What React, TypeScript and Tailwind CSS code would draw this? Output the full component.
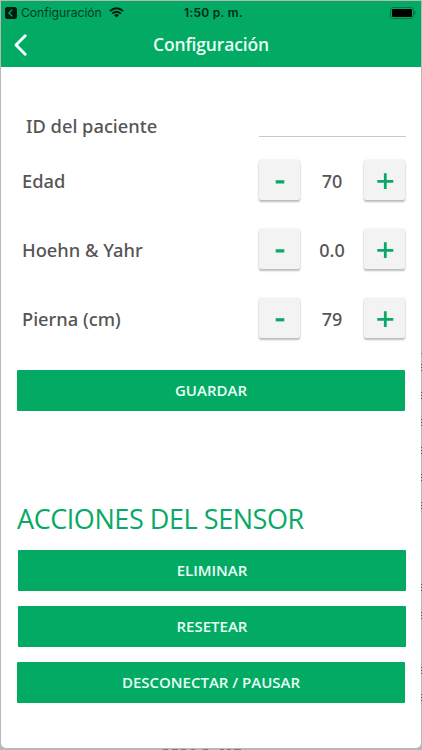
import React from 'react';

const sans = "font-['Noto_Sans','Open_Sans',sans-serif]";

// Vertical positions of the page marks that peek out beside the window.
const marks = [367, 395, 422, 450, 477, 505, 587, 615, 670, 697];

function StepButton({ plus = false }: { plus?: boolean }) {
  return (
    <button
      aria-label={plus ? 'Aumentar' : 'Disminuir'}
      className="flex h-[40px] w-[41px] shrink-0 items-center justify-center rounded-[2px] bg-[#f3f3f3] shadow-[0_2px_2px_rgba(0,0,0,0.25),0_0_2px_rgba(0,0,0,0.12)]"
    >
      <svg width="18" height="18" viewBox="0 0 18 18" fill="none" stroke="#08a965">
        {plus ? <path d="M1.3 10.3H17.3M9.3 2.3V18" strokeWidth="2.8" /> : <path d="M4.7 10.8H13.3" strokeWidth="3.2" />}
      </svg>
    </button>
  );
}

function Row({ label, value }: { label: string; value: string }) {
  return (
    <div className="flex h-[41px] items-start">
      <span className="mt-[9px] w-[238px] pl-px text-[18.3px] leading-[24px] font-medium whitespace-nowrap">{label}</span>
      <StepButton />
      <span className="mt-[9px] w-[64px] text-center text-[18px] leading-[24px] font-medium">{value}</span>
      <StepButton plus />
    </div>
  );
}

function Action({ children, className = '' }: { children: React.ReactNode; className?: string }) {
  return (
    <button
      className={`flex h-[41px] w-[388px] items-center justify-center rounded-[1px] bg-[#02aa64] pb-[2px] font-['Open_Sans'] text-[15px] leading-[20px] font-semibold text-[#e8fff4] ${className}`}
    >
      {children}
    </button>
  );
}

export default function App() {
  return (
    <div className={`relative h-[750px] w-[422px] overflow-hidden bg-[#b8b8b8] pt-px pr-[1px] pb-[2px] pl-px text-[#555] ${sans}`}>
      <svg className="absolute inset-0" width="422" height="750" stroke="#555">
        {marks.map((y) => (
          <path key={y} d={`M421 ${y - 2.5}h1m-1 3h1m-1 3h1`} />
        ))}
        <path d="M421 353.5h1M163 749.5h5m4 0h6m3 0h5m5 0h4m8 0h5m12 0h4m3 0h4m3 0h7" opacity=".6" />
      </svg>
      <main className="relative h-[747px] w-[420px] overflow-hidden rounded-b-[5px] bg-white">
        <header className="h-[66px] bg-[#02aa64]">
          <div className="grid h-[23px] grid-cols-3 items-center pr-[5px] pl-[4px] font-['Inter',sans-serif] text-black">
            <div className="flex items-center">
              <svg width="12" height="12" viewBox="0 0 12 12">
                <rect width="12" height="12" rx="2.5" fill="#001b0f" />
                <path d="M7.3 2.6L3.9 6l3.4 3.4" fill="none" stroke="#02aa64" strokeWidth="1.3" />
              </svg>
              <span className="ml-[4px] text-[12.2px] leading-[16px] tracking-[-.05px] text-[#003d24]">Configuración</span>
              <svg className="ml-[7px] shrink-0" width="15" height="11" viewBox="0 0 15 11" fill="none" stroke="#001b0f" strokeWidth="1.9">
                <path d="M.8 4.1Q7.5-1.8 14.2 4.1M3.2 6.6Q7.5 2.8 11.8 6.6" />
                <path d="M7.5 10.5L5 8q2.5-2 5 0z" fill="#001b0f" stroke="none" />
              </svg>
            </div>
            <span className="pl-[6px] text-center text-[12px] leading-[16px] font-semibold tracking-[.3px] text-[#00291a]">1:50 p. m.</span>
            <svg className="justify-self-end" width="26" height="12" viewBox="0 0 26 12">
              <rect x=".5" y=".5" width="23" height="11" rx="2.5" fill="none" stroke="#047648" />
              <rect x="2" y="2" width="20" height="8" rx="1" fill="#000" />
              <path d="M24.5 4v4q1.5-.7 1.5-2t-1.5-2" fill="#047648" />
            </svg>
          </div>
          <div className="grid h-[42px] grid-cols-[40px_1fr_40px] items-center">
            <svg className="ml-[12px]" width="15" height="24" viewBox="0 0 15 24" fill="none" stroke="#efffff" strokeWidth="3" strokeLinecap="round" strokeLinejoin="round">
              <path d="M12.2 2.8L3 12l9.2 9.2" />
            </svg>
            <h1 className="pb-[2px] text-center font-['Open_Sans'] text-[17.5px] leading-[24px] font-semibold tracking-[-.15px] text-[#e8fff4]">Configuración</h1>
          </div>
        </header>
        <section className="pt-[43px] pl-[20px]">
          <div className="flex h-[27px] w-[385px] items-start justify-between">
            <label className="mt-[4px] pl-[5px] text-[18.3px] leading-[24px] font-medium">ID del paciente</label>
            <div className="h-[27px] w-[147px] border-b border-[#c9c9c9]" />
          </div>
          <div className="mt-[23px] flex flex-col gap-[28px]">
            <Row label="Edad" value="70" />
            <Row label="Hoehn & Yahr" value="0.0" />
            <Row label="Pierna (cm)" value="79" />
          </div>
        </section>
        <Action className="mt-[31px] ml-[16px]">GUARDAR</Action>
        <h2 className="mt-[90px] ml-[16px] font-['Open_Sans'] text-[27px] leading-[36px] tracking-[-.44px] text-[#08a965]">ACCIONES DEL SENSOR</h2>
        <div className="mt-[13px] flex flex-col gap-[15px] pl-[17px]">
          <Action>ELIMINAR</Action>
          <Action>RESETEAR</Action>
          <Action className="-ml-px">DESCONECTAR / PAUSAR</Action>
        </div>
      </main>
    </div>
  );
}
